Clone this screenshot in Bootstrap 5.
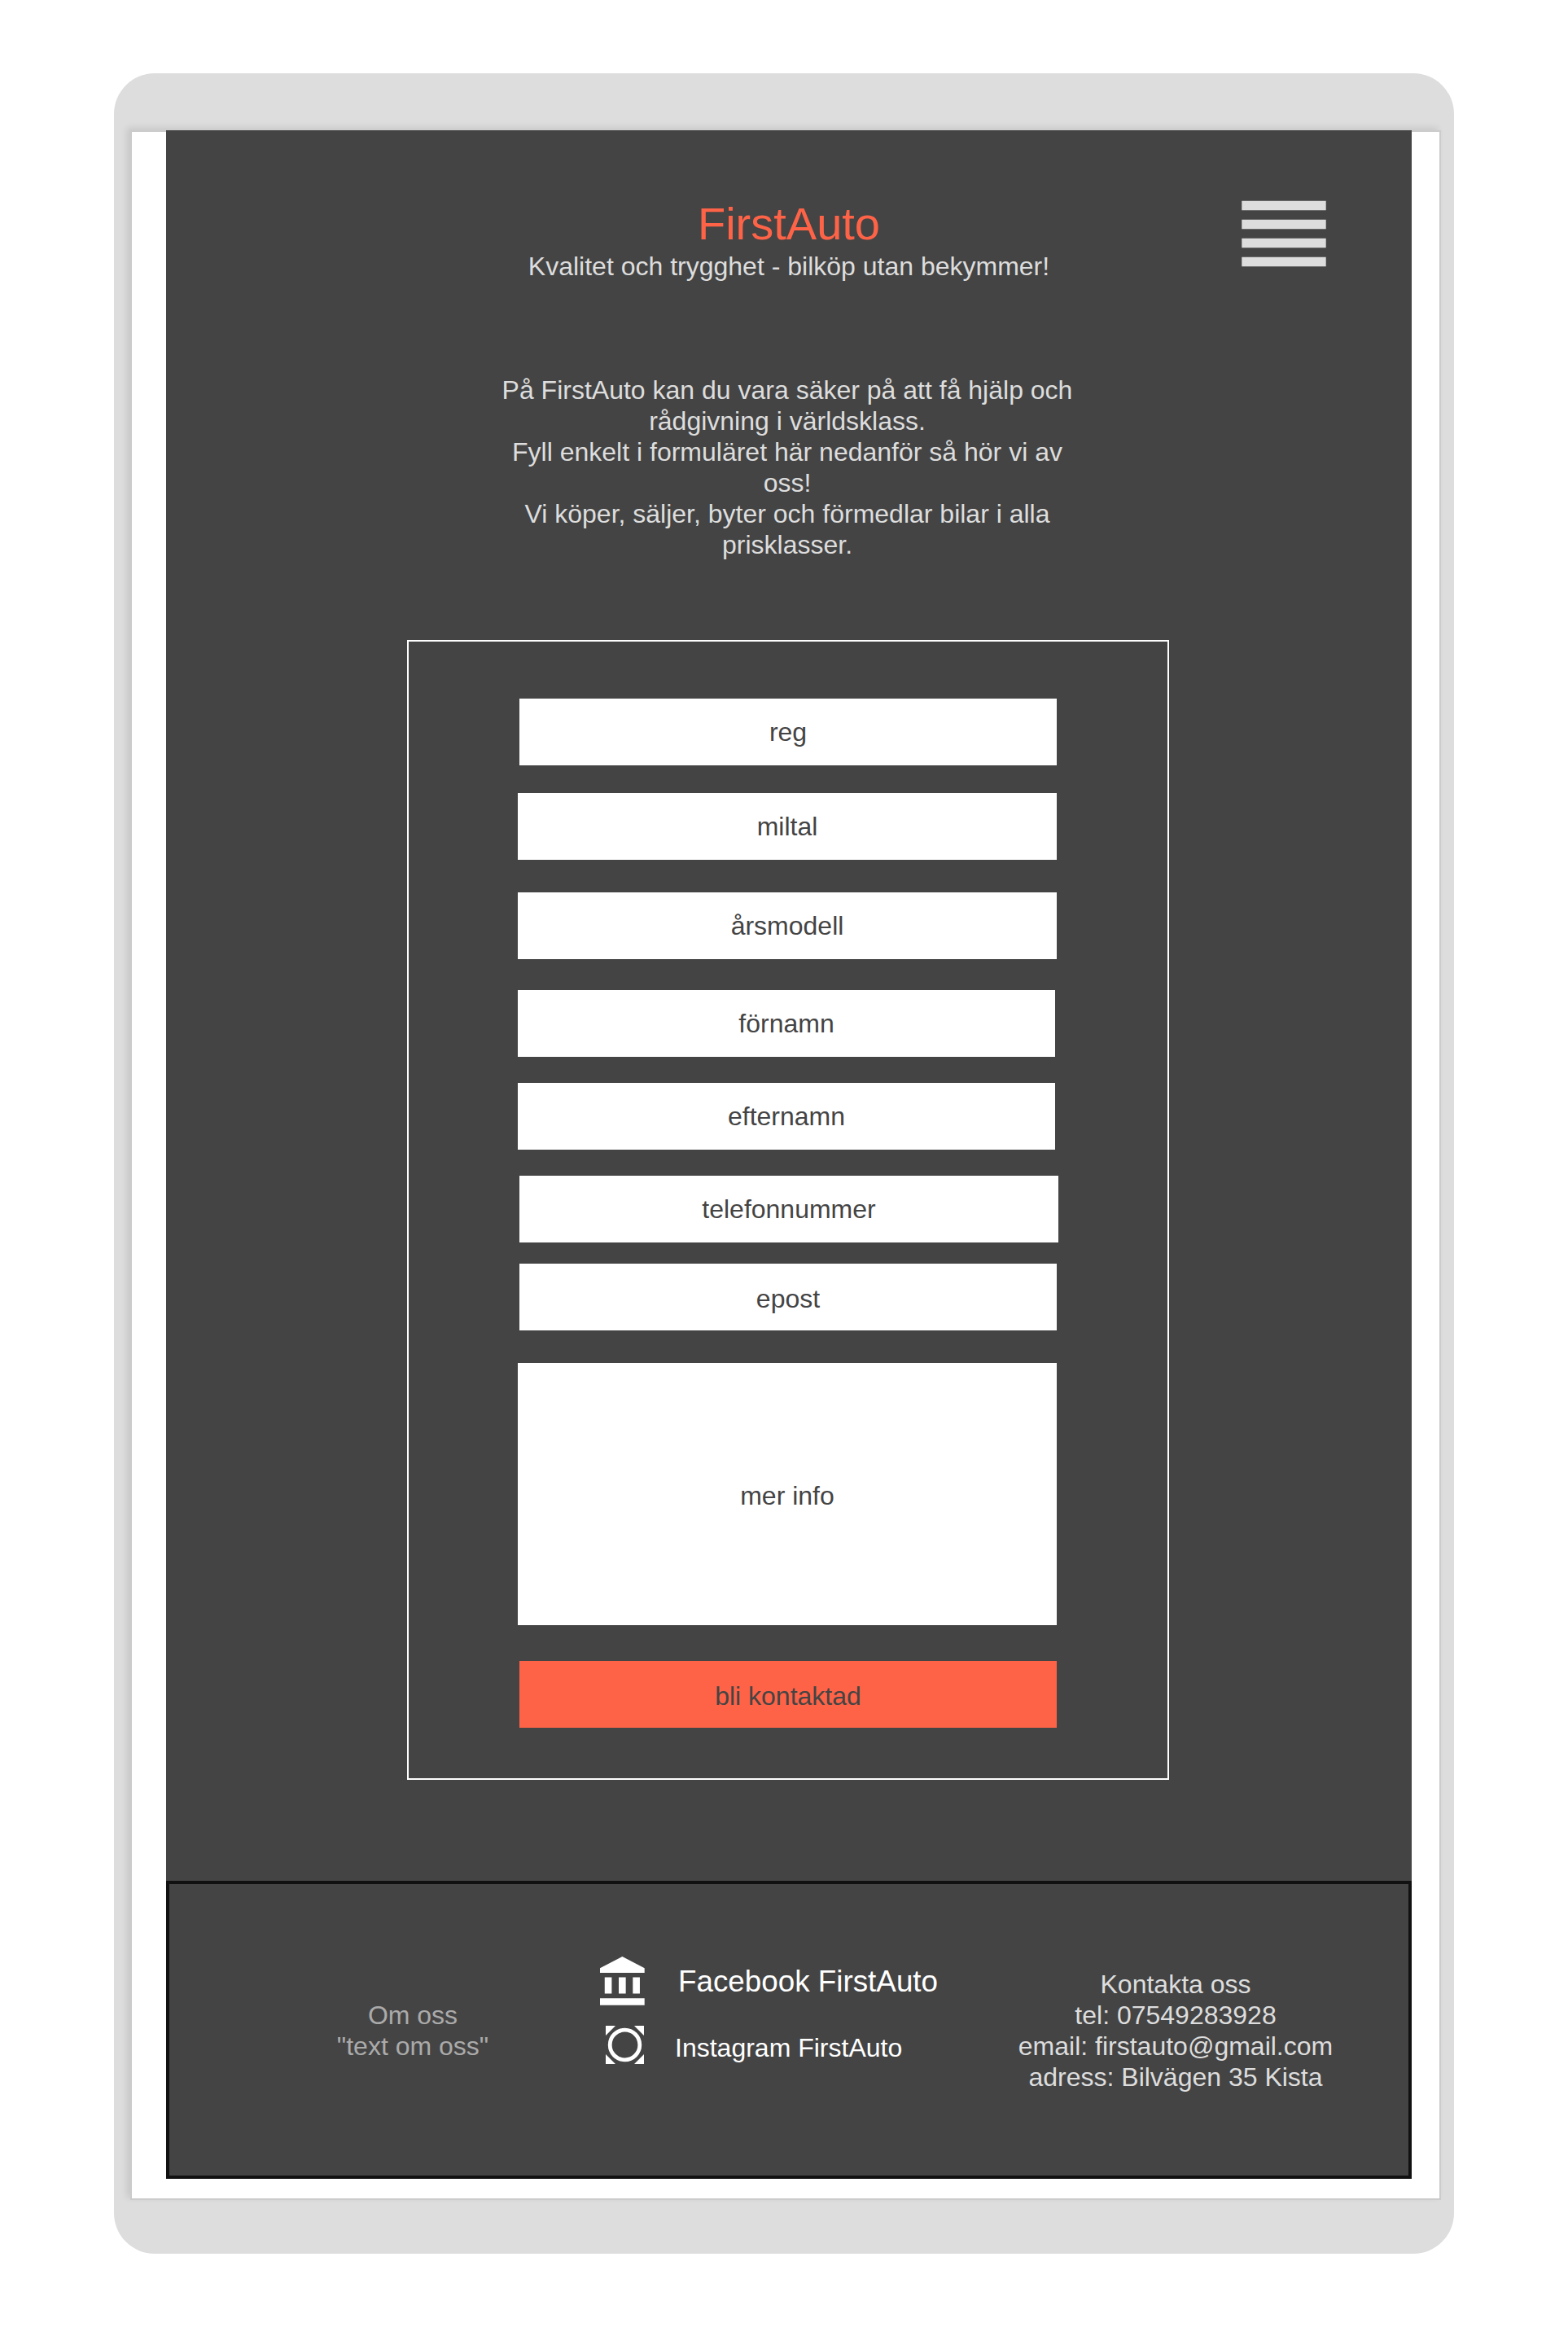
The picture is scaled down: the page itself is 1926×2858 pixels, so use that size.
<!DOCTYPE html>
<html lang="sv">
<head>
<meta charset="utf-8">
<meta name="viewport" content="width=device-width, initial-scale=1">
<title>FirstAuto</title>
<link href="https://cdn.jsdelivr.net/npm/bootstrap@5.3.0/dist/css/bootstrap.min.css" rel="stylesheet">
<style>
  body { font-family: "Liberation Sans", Arial, sans-serif; font-size: 32px; line-height: 38px; color: #ddd; background: #fff; padding: 90px 140px; }
  .device { height: 2678px; background: #ddd; border-radius: 50px; padding: 70px 16px 66px 20px; }
  .screen { height: 2542px; background: #fff; border: 2px solid #ccc; padding: 0 34px 24px 42px; box-shadow: -4px -3px 8px rgba(0,0,0,.1); }
  .site { height: 2516px; margin-top: -2px; background: #444; }
  .topbar { height: 300px; padding: 83px 105px 0; }
  .side { width: 104px; }
  .brand { font-size: 56px; line-height: 64px; color: #ff6347; margin-bottom: 1px; font-weight: 400; }
  .menu { width: 104px; height: 83px; margin-top: 3px; }
  .intro { height: 326px; padding-right: 4px; }
  .contact-form { width: 936px; height: 1400px; margin-left: 296px; border: 2px solid #fff; padding: 70px 136px 0 134px; }
  .field { height: 82px; width: 662px; border: 0; border-radius: 0; background: #fff; color: #444; padding: 0; font-size: 32px; line-height: 38px; flex-shrink: 0; }
  .slim { width: 660px; }
  .inset { margin-left: 2px; }
  .low { padding-top: 4px; }
  .tall { height: 322px; }
  .send, .send:hover { background: #ff6347; color: #444; }
  .g34 { margin-top: 34px; } .g40 { margin-top: 40px; } .g38 { margin-top: 38px; }
  .g32 { margin-top: 32px; } .g26 { margin-top: 26px; } .g44 { margin-top: 44px; }
  .foot { height: 366px; margin-top: 124px; border: 4px solid #111; padding-left: 149px; }
  .about { width: 300px; padding-top: 142px; color: #aaa; }
  .social { width: 450px; margin-left: 80px; padding-top: 89px; color: #fff; }
  .facebook { height: 60px; gap: 41.3px; font-size: 36.8px; line-height: 42px; }
  .facebook svg { width: 54.7px; height: 59.7px; }
  .facebook span { padding-top: 10px; }
  .instagram { height: 47px; margin-top: 25px; padding-left: 7px; gap: 38px; }
  .instagram svg { width: 47px; height: 47px; }
  .instagram span { padding-top: 8px; }
  .address { width: 400px; margin-left: 57px; padding-top: 104px; }
</style>
</head>
<body>
<div class="device">
  <div class="screen">
    <div class="site d-flex flex-column">
      <header class="topbar d-flex justify-content-between text-center">
        <div class="side"></div>
        <div>
          <h1 class="brand">FirstAuto</h1>
          <div class="tagline">Kvalitet och trygghet - bilköp utan bekymmer!</div>
        </div>
        <svg class="menu" viewBox="0 0 104 83" fill="#ddd" aria-label="Meny">
          <path d="M.3.7h103.4v11.6H.3zM.3 23.7h103.4v11.6H.3zM.3 46.7h103.4v11.6H.3zM.3 69.7h103.4v11.6H.3z"/>
        </svg>
      </header>
      <p class="intro text-center mb-0">
        På FirstAuto kan du vara säker på att få hjälp och<br>
        rådgivning i världsklass.<br>
        Fyll enkelt i formuläret här nedanför så hör vi av<br>
        oss!<br>
        Vi köper, säljer, byter och förmedlar bilar i alla<br>
        prisklasser.
      </p>
      <form class="contact-form d-flex flex-column align-items-start flex-shrink-0">
        <label class="field slim inset d-flex align-items-center justify-content-center">reg</label>
        <label class="field g34 d-flex align-items-center justify-content-center">miltal</label>
        <label class="field g40 d-flex align-items-center justify-content-center">årsmodell</label>
        <label class="field slim g38 d-flex align-items-center justify-content-center">förnamn</label>
        <label class="field slim g32 d-flex align-items-center justify-content-center">efternamn</label>
        <label class="field inset g32 d-flex align-items-center justify-content-center">telefonnummer</label>
        <label class="field slim inset g26 low d-flex align-items-center justify-content-center">epost</label>
        <label class="field tall g40 low d-flex align-items-center justify-content-center">mer info</label>
        <button type="button" class="btn field slim inset g44 low send d-flex align-items-center justify-content-center">bli kontaktad</button>
      </form>
      <footer class="foot d-flex flex-shrink-0">
        <div class="about text-center flex-shrink-0">Om oss<br>"text om oss"</div>
        <div class="social flex-shrink-0 text-nowrap">
          <div class="facebook d-flex align-items-start">
            <svg class="flex-shrink-0" viewBox="2 1 19 21" preserveAspectRatio="none" fill="#fff"><path d="M4 10v7h3v-7zM10 10v7h3v-7zM2 22h19v-3H2zM16 10v7h3v-7zM11.5 1L2 6v2h19V6z"/></svg>
            <span>Facebook FirstAuto</span>
          </div>
          <div class="instagram d-flex align-items-start">
            <svg class="flex-shrink-0" viewBox="0 0 47 47" fill="#fff"><path d="M0 0h12L0 12zM47 0v12L35 0zM0 47V35l12 12zM47 47H35l12-12z"/><circle cx="23.5" cy="23.5" r="18.3" fill="none" stroke="#fff" stroke-width="4.8"/></svg>
            <span>Instagram FirstAuto</span>
          </div>
        </div>
        <address class="address text-center mb-0 flex-shrink-0">Kontakta oss<br>tel: 07549283928<br>email: firstauto@gmail.com<br>adress: Bilvägen 35 Kista</address>
      </footer>
    </div>
  </div>
</div>
<script src="https://cdn.jsdelivr.net/npm/bootstrap@5.3.0/dist/js/bootstrap.bundle.min.js"></script>
</body>
</html>
